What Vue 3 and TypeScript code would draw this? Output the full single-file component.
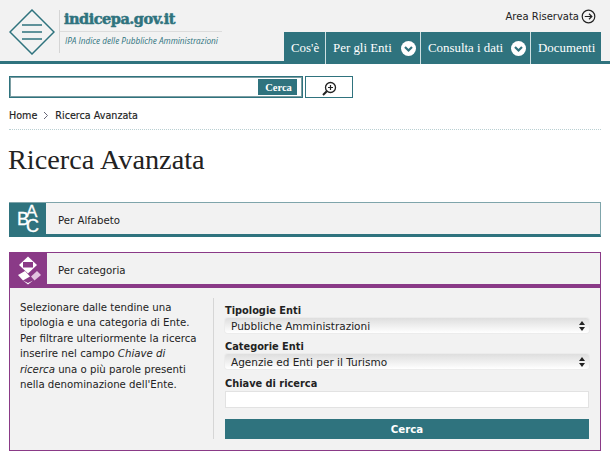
<script setup lang="ts">
const navItems = [
  { label: "Cos'è", caret: false },
  { label: 'Per gli Enti', caret: true },
  { label: 'Consulta i dati', caret: true },
  { label: 'Documenti', caret: false },
]
</script>

<template>
  <div class="page">
    <header class="top">
      <a class="brand">
        <svg class="logo" width="46" height="46" viewBox="0 0 46 46">
          <path d="M23 1 45 23 23 45 1 23Z" fill="none" stroke="#2f737e" stroke-width="1.500" />
          <path d="M13 16h20M13 23h20M13 30h20" stroke="#2f737e" stroke-width="1.700" />
        </svg>
        <div class="brand-text">
          <div class="brand-name">indicepa.gov.it</div>
          <div class="brand-sub">IPA Indice delle Pubbliche Amministrazioni</div>
        </div>
      </a>
      <div class="top-right">
        <a class="reserved">
          Area Riservata
          <svg width="15" height="15" viewBox="0 0 15 15">
            <circle cx="7.500" cy="7.500" r="6.300" fill="none" stroke="#222" stroke-width="1.200" />
            <path d="M3.800 7.500h7M8 4.800l2.800 2.700L8 10.200" fill="none" stroke="#222" stroke-width="1.200" />
          </svg>
        </a>
        <nav class="nav">
          <a v-for="item in navItems" :key="item.label" class="nav-item">
            <span>{{ item.label }}</span>
            <svg v-if="item.caret" class="caret" width="15" height="15" viewBox="0 0 15 15">
              <circle cx="7.500" cy="7.500" r="7.500" fill="#fff" />
              <path d="M4 6l3.500 3.500L11 6" fill="none" stroke="#2f737e" stroke-width="2.200" />
            </svg>
          </a>
        </nav>
      </div>
    </header>

    <div class="search">
      <div class="search-box">
        <input class="search-input" type="text" />
        <button class="search-btn">Cerca</button>
      </div>
      <button class="zoom-btn">
        <svg width="16" height="16" viewBox="0 0 16 16">
          <circle cx="9.500" cy="6.500" r="5" fill="none" stroke="#222" stroke-width="1.300" />
          <path d="M7 6.500h5M9.500 4v5" stroke="#222" stroke-width="1.200" />
          <path d="M5.800 10.200 2 14" stroke="#222" stroke-width="2" />
        </svg>
      </button>
    </div>

    <div class="crumbs">
      <span>Home</span>
      <svg width="6" height="9" viewBox="0 0 6 9"><path d="M1 1l3.500 3.500L1 8" fill="none" stroke="#667" stroke-width="1" /></svg>
      <span>Ricerca Avanzata</span>
    </div>

    <h1 class="title">Ricerca Avanzata</h1>

    <section class="acc teal">
      <div class="acc-icon">
        <svg width="37" height="33" viewBox="0 0 37 33">
          <text x="8" y="23" class="ic-letter" font-size="18">B</text>
          <text x="17" y="15" class="ic-letter" font-size="17">A</text>
          <text x="17" y="29.500" class="ic-letter" font-size="18">C</text>
        </svg>
      </div>
      <div class="acc-label">Per Alfabeto</div>
    </section>

    <section class="acc purple">
      <div class="acc-head">
        <div class="acc-icon">
          <svg width="37" height="35" viewBox="0 0 37 35">
            <path d="M18 3.500 27 12 18 20.500 9 12Z" fill="#fff" />
            <rect x="13" y="9" width="10" height="5.500" fill="#8a3a87" />
            <path d="M8 22l7-4 5 5.500-7 4Z" fill="#fff" />
            <path d="M21 23.500l6-5.500 4 4-6.500 5.500Z" fill="#e3c5e0" />
            <path d="M13 27.500l5 2.500 5-2.500-5 4Z" fill="#fff" />
          </svg>
        </div>
        <div class="acc-label">Per categoria</div>
      </div>
      <div class="panel">
        <p class="intro">
          Selezionare dalle tendine una tipologia e una categoria di Ente. Per filtrare
          ulteriormente la ricerca inserire nel campo <em>Chiave di ricerca</em> una o più
          parole presenti nella denominazione dell'Ente.
        </p>
        <form class="form" @submit.prevent>
          <label class="lab first">Tipologie Enti</label>
          <div class="sel">
            <span>Pubbliche Amministrazioni</span>
            <i class="arrows"></i>
          </div>
          <label class="lab second">Categorie Enti</label>
          <div class="sel">
            <span>Agenzie ed Enti per il Turismo</span>
            <i class="arrows"></i>
          </div>
          <label class="lab third">Chiave di ricerca</label>
          <input class="key" type="text" />
          <button class="go">Cerca</button>
        </form>
      </div>
    </section>
  </div>
</template>

<style>
html, body { margin: 0; background: #fff; }
</style>

<style scoped>
.page {
  width: 610px;
  height: 461px;
  overflow: hidden;
  font-family: "DejaVu Sans", sans-serif;
  color: #222;
  box-sizing: border-box;
}
.top {
  height: 61px;
  background: #f2f2f2;
  border-bottom: 3px solid #2f737e;
  display: flex;
  justify-content: space-between;
  padding: 0 9px;
}
.brand { display: flex; align-items: flex-start; padding-top: 9px; }
.brand-text {
  margin-left: 4px;
  border-left: 1px solid #d5d5d5;
  height: 43px;
  margin-top: 1px;
}
.brand-name {
  font-family: "DejaVu Serif", serif;
  font-weight: 700;
  font-size: 14.500px;
  line-height: 17px;
  height: 21px;
  padding-left: 4px;
  color: #2f737e;
  border-bottom: 1px solid #dcdcdc;
  width: 158px;
  letter-spacing: -0.500px;
  -webkit-text-stroke: 0.500px #2f737e;
}
.brand-sub {
  font-family: "Open Sans", sans-serif;
  font-style: italic;
  font-size: 8.200px;
  line-height: 17px;
  padding-left: 5px;
  color: #2f737e;
}
.top-right { display: flex; flex-direction: column; align-items: flex-end; }
.reserved {
  display: flex;
  align-items: center;
  gap: 2px;
  height: 32px;
  font-size: 10px;
  padding-right: 5px;
  box-sizing: border-box;
}
.nav {
  display: grid;
  grid-template-columns: 41px 95px 110px 71px;
  height: 32px;
  background: #2f737e;
  margin-bottom: -3px;
}
.nav-item {
  display: flex;
  align-items: center;
  justify-content: space-between;
  box-sizing: border-box;
  color: #fff;
  font-family: "Liberation Serif", serif;
  font-size: 12.900px;
  padding: 0 4px 0 7px;
}
.nav-item + .nav-item { border-left: 1px solid #cfe0e2; }
.caret { flex: none; }
.search { display: flex; gap: 2px; margin: 12px 0 0 9px; height: 22px; }
.search-box {
  width: 294px;
  box-sizing: border-box;
  border: 1px solid #2f737e;
  box-shadow: inset 0 0 0 1px #7d9ea3;
  display: flex;
  align-items: center;
  padding-right: 5px;
}
.search-input { flex: 1; border: 0; background: none; min-width: 0; outline: 0; }
.search-btn {
  width: 39px;
  height: 16px;
  padding: 0 0 0 2px;
  border: 0;
  background: #2f737e;
  color: #fff;
  font-family: "Liberation Serif", serif;
  font-weight: 700;
  font-size: 10.500px;
}
.zoom-btn {
  width: 48px;
  padding: 3px 0 0;
  background: #fff;
  border: 1px solid #2f737e;
  display: flex;
  align-items: center;
  justify-content: center;
}
.crumbs {
  display: flex;
  align-items: center;
  gap: 6px;
  margin: 10px 9px 0;
  height: 22px;
  box-sizing: border-box;
  border-bottom: 1px dotted #b9cfd2;
  padding-bottom: 7px;
  font-size: 9.600px;
  -webkit-text-stroke: 0.150px #222;
}
.title {
  margin: 14px 9px 0 8px;
  height: 58px;
  font-family: "Liberation Serif", serif;
  font-weight: 400;
  font-size: 28.300px;
  line-height: 31px;
  color: #222;
}
.acc { margin: 0 9px; box-sizing: border-box; background: #f2f2f2; }
.acc-label { font-size: 10.200px; padding-top: 3px; }
.acc-icon { width: 37px; display: flex; align-items: center; justify-content: center; flex: none; color: #fff; }
.ic-letter { fill: #fff; stroke: #fff; stroke-width: 0.300px; font-family: "Liberation Sans", sans-serif; }
.teal {
  height: 35px;
  display: flex;
  align-items: center;
  border-top: 1px solid #7fa5ab;
  border-right: 1px solid #7fa5ab;
  border-bottom: 3px solid #2f737e;
}
.teal .acc-icon { background: #2f737e; height: 100%; }
.teal .acc-label { margin-left: 12px; }
.purple {
  margin-top: 15px;
  height: 199px;
  border: 1px solid #8a3a87;
}
.acc-head { display: flex; align-items: center; height: 35px; box-sizing: border-box; border-bottom: 4px solid #8a3a87; }
.purple .acc-icon { background: #8a3a87; height: 35px; align-self: flex-start; }
.purple .acc-label { margin-left: 11px; }
.panel { display: flex; padding: 10px 11px 11px 10px; }
.intro {
  margin: 0;
  width: 178px;
  font-size: 10.200px;
  line-height: 15.400px;
  padding: 2px 15px 0 0;
  border-right: 1px solid #d6d6d6;
  flex: none;
  height: 139px;
}
.form { flex: 1; display: flex; flex-direction: column; padding-left: 11px; }
.lab { font-weight: 700; font-size: 9.800px; line-height: 14px; height: 14px; }
.lab.first { margin-top: 6px; }
.lab.second { margin-top: 7px; }
.lab.third { margin-top: 8px; }
.sel {
  height: 15px;
  border-radius: 3px;
  background: linear-gradient(#dedede, #fff);
  display: flex;
  align-items: center;
  justify-content: space-between;
  padding: 0 4px 0 6px;
  font-size: 10.500px;
  box-shadow: 0 0 0 1px #ececec;
}
.arrows {
  width: 0;
  height: 10px;
  position: relative;
  border-left: 3px solid transparent;
  border-right: 3px solid transparent;
}
.arrows::before, .arrows::after {
  content: "";
  position: absolute;
  left: -3px;
  border-left: 3px solid transparent;
  border-right: 3px solid transparent;
}
.arrows::before { top: 0; border-bottom: 4px solid #222; }
.arrows::after { bottom: 0; border-top: 4px solid #222; }
.key {
  height: 17px;
  box-sizing: border-box;
  margin: 0;
  background: #fff;
  border: 1px solid #e2e2e2;
}
.go {
  margin-top: 11px;
  height: 20px;
  border: 0;
  padding: 0;
  background: #2f737e;
  color: #fff;
  font-family: "DejaVu Sans", sans-serif;
  font-weight: 700;
  font-size: 10.200px;
}
</style>
